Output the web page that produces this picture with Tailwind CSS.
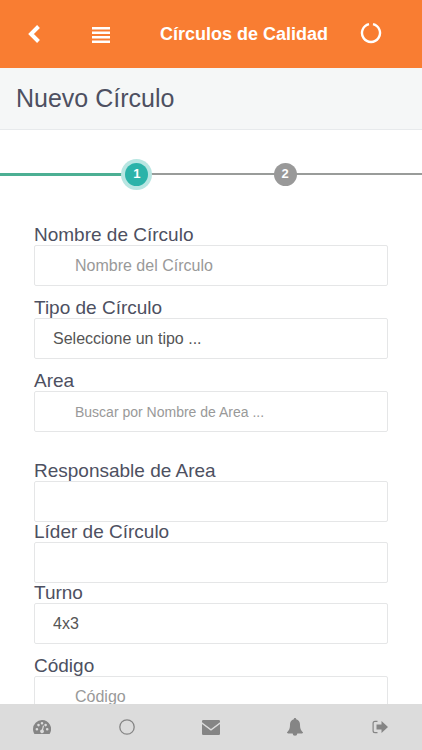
<!DOCTYPE html>
<html lang="es">
<head>
    <meta charset="UTF-8">
    <meta name="viewport" content="width=device-width, initial-scale=1">
    <script src="https://cdn.jsdelivr.net/npm/@tailwindcss/browser@4"></script>
    <title>Círculos de Calidad</title>
</head>
<body class="h-screen flex flex-col bg-white text-[#4d5061] font-['Liberation_Sans',Arial,sans-serif]">
<!-- Barra superior -->
<header class="shrink-0 h-[68px] flex items-center justify-between pl-6 pr-10 bg-[#f97d32] text-white">
    <div class="flex items-center gap-12">
        <button type="button" aria-label="Volver" class="p-1">
            <svg class="w-3 h-5" viewBox="0 0 12 20" fill="none" stroke="currentColor" stroke-width="4"><path d="M10.500 2.500 3 10l7.500 7.500"/></svg>
        </button>
        <button type="button" aria-label="Menú">
            <svg class="w-[18px] h-[18px]" viewBox="0 0 18 18" fill="currentColor"><path d="M0 2h18v2.500H0zM0 6.500h18V9H0zM0 11h18v2.500H0zM0 15.500h18V18H0z"/></svg>
        </button>
    </div>
    <div class="flex items-center gap-8">
        <h1 class="text-lg font-bold">Círculos de Calidad</h1>
        <button type="button" aria-label="Recargar">
            <svg class="w-[22px] h-[22px]" viewBox="0 0 22 22" fill="none" stroke="currentColor" stroke-width="2.400"><path d="M13 1.200a9 9 0 1 1-4 0"/></svg>
        </button>
    </div>
</header>
<main class="flex-1 min-h-0 overflow-y-auto [scrollbar-width:none]">
    <div class="bg-[#f5f7f7] border-b border-[#e7eaec] px-4 py-4">
        <h2 class="text-[25px] leading-[29px]">Nuevo Círculo</h2>
    </div>
    <!-- Pasos -->
    <ol class="relative mt-8 flex items-center justify-evenly h-6 text-white text-[13px] font-bold">
        <li class="absolute left-0 w-1/3 h-[3px] bg-[#4caf93]" aria-hidden="true"></li>
        <li class="absolute left-1/3 right-0 h-[2px] bg-[#999c9a]" aria-hidden="true"></li>
        <li class="relative size-[23px] rounded-full bg-[#2bb3a9] ring-4 ring-[#b8e6e2] flex items-center justify-center">1</li>
        <li class="relative size-[23px] rounded-full bg-[#999] flex items-center justify-center">2</li>
    </ol>
    <form class="px-[34px] pt-[39px] pb-8 text-[19px] leading-5">
        <div class="mb-3">
            <label for="nombre" class="block">Nombre de Círculo</label>
            <input id="nombre" type="text" placeholder="Nombre del Círculo" class="block w-full h-[41px] border border-[#e5e6e7] rounded-xs pl-10 pr-3 text-base placeholder:text-[#999]">
        </div>
        <div class="mb-3">
            <label for="tipo" class="block">Tipo de Círculo</label>
            <select id="tipo" class="block w-full h-[41px] border border-[#e5e6e7] rounded-xs px-[18px] text-base text-[#555] appearance-none">
                <option>Seleccione un tipo ...</option>
            </select>
        </div>
        <div class="mb-[29px]">
            <label for="area" class="block">Area</label>
            <input id="area" type="text" placeholder="Buscar por Nombre de Area ..." class="block w-full h-[41px] border border-[#e5e6e7] rounded-xs pl-10 pr-3 text-sm placeholder:text-[#999]">
        </div>
        <label for="responsable" class="block">Responsable de Area</label>
        <input id="responsable" type="text" class="block w-full h-[41px] border border-[#e5e6e7] rounded-xs px-[18px] text-base">
        <label for="lider" class="block">Líder de Círculo</label>
        <input id="lider" type="text" class="block w-full h-[41px] border border-[#e5e6e7] rounded-xs px-[18px] text-base">
        <div class="mb-3">
            <label for="turno" class="block">Turno</label>
            <select id="turno" class="block w-full h-[41px] border border-[#e5e6e7] rounded-xs px-[18px] text-base text-[#555] appearance-none">
                <option>4x3</option>
            </select>
        </div>
        <label for="codigo" class="block">Código</label>
        <input id="codigo" type="text" placeholder="Código" class="block w-full h-[41px] border border-[#e5e6e7] rounded-xs pl-10 pr-3 text-base placeholder:text-[#999]">
    </form>
</main>
<!-- Barra inferior -->
<nav class="shrink-0 h-[46px] grid grid-cols-5 items-center justify-items-center bg-[#dcdcdc] text-[#858585]">
    <a href="#" aria-label="Panel">
        <svg class="w-[18px] h-4" viewBox="0 0 18 16" fill="currentColor"><path fill-rule="evenodd" d="M9 1a9 9 0 0 0-9 9c0 1.700.5 3.400 1.400 4.900h15.200A9 9 0 0 0 9 1zM3.900 9a1.300 1.300 0 1 0 0 2.600 1.300 1.300 0 0 0 0-2.600zM5.500 4.800a1.300 1.300 0 1 0 0 2.600 1.300 1.300 0 0 0 0-2.600zM9 2.900a1.300 1.300 0 1 0 0 2.600 1.300 1.300 0 0 0 0-2.600zM12.600 4.800a1.300 1.300 0 1 0 0 2.600 1.300 1.300 0 0 0 0-2.600zM14.200 9a1.300 1.300 0 1 0 0 2.600 1.300 1.300 0 0 0 0-2.600zM9.900 6.500l-1 3.900a1.900 1.900 0 1 0 1.200.3l1-3.900z"/></svg>
    </a>
    <a href="#" aria-label="Círculos">
        <svg class="size-4" viewBox="0 0 16 16" fill="none" stroke="currentColor" stroke-width="1.300"><circle cx="8" cy="8" r="7.200"/></svg>
    </a>
    <a href="#" aria-label="Mensajes">
        <svg class="w-[18px] h-[15px]" viewBox="0 0 18 15" fill="currentColor"><path d="M0 1.200Q0 0 1.200 0h15.600Q18 0 18 1.200v1L9 9 0 2.200zM0 4l9 6.800L18 4v9.800q0 1.200-1.200 1.200H1.200Q0 15 0 13.800z"/></svg>
    </a>
    <a href="#" aria-label="Avisos">
        <svg class="w-4 h-[18px]" viewBox="0 0 16 18" fill="currentColor"><path d="M8 0c.7 0 1.200.5 1.200 1.300C11.700 1.900 13 4 13 6.500c0 4.500 1.200 6.300 3 7.700 0 .8-.5 1.200-1.200 1.200h-4.500a2.300 2.300 0 0 1-4.600 0H1.200C.5 15.400 0 15 0 14.200c1.800-1.400 3-3.200 3-7.700C3 4 4.300 1.900 6.800 1.300 6.800.5 7.300 0 8 0z"/></svg>
    </a>
    <a href="#" aria-label="Salir">
        <svg class="w-4 h-[14px]" viewBox="0 0 16 14" fill="currentColor"><path d="M5.500 13.200H3A2.500 2.500 0 0 1 .5 10.700V3.300A2.500 2.500 0 0 1 3 .8h2.500V2H3a1.300 1.300 0 0 0-1.300 1.300v7.400A1.300 1.300 0 0 0 3 12h2.500zM9.500 1 16 7l-6.500 6V9.500H4.500v-5h5z"/></svg>
    </a>
</nav>
</body>
</html>
